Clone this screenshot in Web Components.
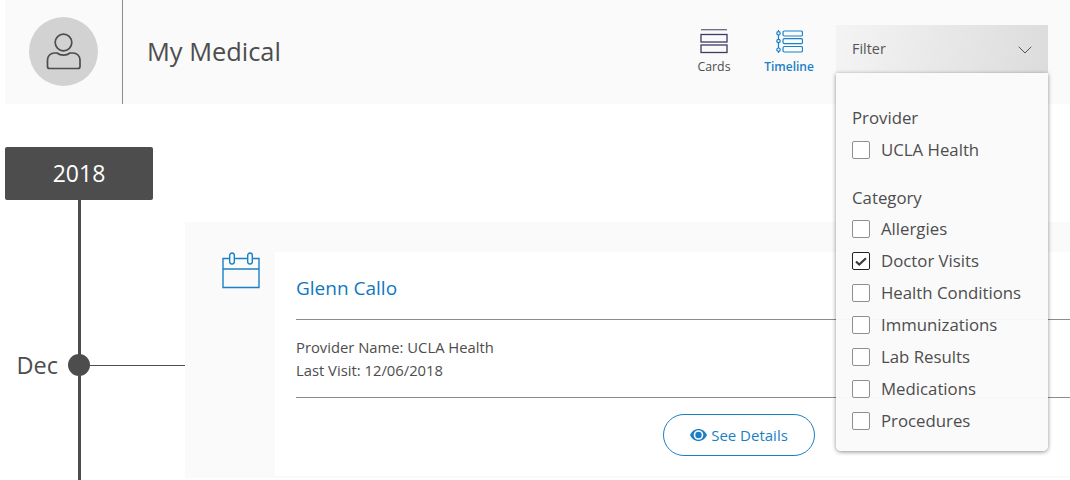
<!doctype html>
<html><head><meta charset="utf-8">
<style>
html,body{margin:0;padding:0;background:#fff}
body{width:1070px;height:480px;overflow:hidden;font-family:"Open Sans",sans-serif;color:#4d4d4d}
</style></head><body>
<med-page>
  <med-header slot="header"></med-header>
  <med-timeline slot="rail"></med-timeline>
  <med-card slot="main"></med-card>
</med-page>
<script>
function el(name,html){customElements.define(name,class extends HTMLElement{connectedCallback(){this.attachShadow({mode:'open'}).innerHTML=html}})}
el('med-page',`<style>:host{display:block;width:1070px;height:480px;overflow:hidden}
.h{display:block;position:relative;z-index:2}.b{display:flex;height:376px}.r{display:block;width:185px;flex:none}.m{display:block;flex:1;min-width:0}</style>
<div class="h"><slot name="header"></slot></div><div class="b"><div class="r"><slot name="rail"></slot></div><div class="m"><slot name="main"></slot></div></div>`);
el('med-header',`<style>:host{display:flex;align-items:stretch;height:104px;margin-left:5px;background:#fafafa;color:#4d4d4d}
.av{width:118px;box-sizing:border-box;border-right:1px solid #8c8c8c;display:flex;align-items:center;padding:0 0 1px 24px}
.c{width:69px;height:69px;border-radius:50%;background:#d2d2d2;display:flex;align-items:center;justify-content:center;flex:none}
h1{margin:0 0 0 24px;font:400 25.400px/103px "Open Sans",sans-serif;color:#4d4d4d;flex:1}
</style><div class="av"><div class="c"><svg width="36" height="40" viewBox="0 0 36 40" fill="none" stroke="#4d4d4d" stroke-width="1.700"><circle cx="17.500" cy="10.500" r="8.300"/><path d="M11 21c1.800 1.500 4 2.200 6.500 2.200S22.200 22.500 24 21h3c4 0 7 3 7 7v6.500c0 1.100-.9 2-2 2H3.500c-1.100 0-2-.9-2-2V28c0-4 3-7 7-7z"/></svg></div></div>
<h1>My Medical</h1><med-views></med-views><med-filter></med-filter><div style="width:22px"></div>`);
el('med-views',`<style>:host{display:flex;gap:33px;font:400 12.300px/16px "Open Sans",sans-serif;color:#4d4d4d;padding-top:29px;box-sizing:border-box}
.v{display:flex;flex-direction:column;align-items:center;white-space:nowrap}.v svg{display:block;height:25px;margin-bottom:5px}
.t{color:#1a80c7;font-weight:600;font-size:12px}
</style>
<div class="v" style="width:34px"><svg width="28" height="25" viewBox="0 0 28 25" fill="none" stroke="#3f3a63" stroke-width="1.300"><path d="M1 .7h26" stroke="#6d6982"/><rect x="1" y="5.500" width="26" height="7.500"/><rect x="1" y="16" width="26" height="7.500"/></svg><span>Cards</span></div>
<div class="v" style="width:50px"><svg width="28" height="25" viewBox="0 0 28 25" fill="none" stroke="#1a80c7" stroke-width="1.200"><path d="M3.500 1v23"/><circle cx="3.500" cy="4.300" r="1.700" fill="#fafafa"/><circle cx="3.500" cy="12" r="1.700" fill="#fafafa"/><circle cx="3.500" cy="20.700" r="1.700" fill="#fafafa"/><rect x="8" y="2" width="19.500" height="5" rx="1.500"/><rect x="8" y="9.700" width="19.500" height="5" rx="1.500"/><rect x="8" y="17.500" width="19.500" height="5.500" rx="1.500"/></svg><span class="t">Timeline</span></div>`);
el('med-filter',`<style>:host{display:block;position:relative;width:212px;height:48px;margin:25px 0 0 22px;flex:none;font-family:"Open Sans",sans-serif}
.btn{height:48px;box-sizing:border-box;padding:0 16px;display:flex;align-items:center;justify-content:space-between;background:linear-gradient(100deg,#f4f4f4,#dcdcdc);font-size:14.400px;color:#555}
.btn span{margin-top:-2px}
.p{position:absolute;left:0;top:48px;width:212px;height:378px;box-sizing:border-box;padding:34px 16px 0;background:rgba(250,250,250,.96);border-radius:0 0 5px 5px;box-shadow:0 1px 4px rgba(0,0,0,.45)}
h2{margin:0;font:400 16.800px/22px "Open Sans",sans-serif;color:#4d4d4d}
.g{margin-top:5px;margin-bottom:21px}
</style><div class="btn"><span>Filter</span><svg width="14" height="8" viewBox="0 0 14 8" fill="none" stroke="#555" stroke-width="1" style="margin-right:0;margin-top:2px"><path d="M.7.7 7 7l6.300-6.300"/></svg></div>
<div class="p"><h2>Provider</h2><div class="g"><med-check label="UCLA Health"></med-check></div>
<h2>Category</h2><div class="g" style="margin-top:4px"><med-check label="Allergies"></med-check><med-check label="Doctor Visits" checked="1"></med-check><med-check label="Health Conditions"></med-check><med-check label="Immunizations"></med-check><med-check label="Lab Results"></med-check><med-check label="Medications"></med-check><med-check label="Procedures"></med-check></div></div>`);
customElements.define('med-check',class extends HTMLElement{connectedCallback(){const c=this.hasAttribute('checked');this.attachShadow({mode:'open'}).innerHTML=`<style>:host{display:flex;align-items:center;height:32px;font:400 16.800px/22px "Open Sans",sans-serif;color:#4d4d4d}
.b{width:18px;height:18px;box-sizing:border-box;border:${c?'1.5px solid #222':'1px solid #8f8f8f'};border-radius:2px;background:#fff;margin-right:11px;display:flex;align-items:center;justify-content:center;flex:none}</style>
<span class="b">${c?'<svg width="12" height="9" viewBox="0 0 12 9" fill="none" stroke="#3a3a3a" stroke-width="2.200"><path d="M1 4.500l3.200 3L11 1.200"/></svg>':''}</span><span>${this.getAttribute('label')}</span>`}});
el('med-timeline',`<style>:host{display:flex;flex-direction:column;height:376px;padding-top:43px;box-sizing:border-box;position:relative}
.y{margin-left:5px;width:148px;height:52.500px;background:#4d4d4d;color:#fff;border-radius:2px;font:400 23px/52px "Open Sans",sans-serif;text-align:center;flex:none}
.r{flex:1;position:relative}
.l{position:absolute;left:78px;top:0;bottom:0;width:3px;background:#4d4d4d}
.m{position:absolute;left:0;right:0;top:154.500px;height:22px;display:flex;align-items:center}
.d{width:58px;text-align:right;font:400 23.500px/22px "Open Sans",sans-serif;color:#4d4d4d;margin-right:10px}
.o{width:22px;height:22px;border-radius:50%;background:#4d4d4d;flex:none}
.c{flex:1;height:1px;background:#4d4d4d}
</style><div class="y">2018</div><div class="r"><div class="l"></div><div class="m"><span class="d">Dec</span><span class="o"></span><span class="c"></span></div></div>`);
el('med-card',`<style>:host{display:flex;margin-top:118px;height:256px;box-sizing:border-box;padding:30px 0 2px 0;background:#fafafa;font-family:"Open Sans",sans-serif;color:#4d4d4d}
.i{width:90px;flex:none;padding-left:37px;box-sizing:border-box}.i svg{display:block}
.w{flex:1;background:#fff;padding-left:21px;display:flex;flex-direction:column}
a{color:#0f78c0;font:400 19px/24px "Open Sans",sans-serif;margin-top:24px;height:43px;border-bottom:1px solid #8c8c8c}
.t{font-size:14.800px;line-height:23px;padding:16px 0 15px;border-bottom:1px solid #8c8c8c;color:#4d4d4d}
.b{margin:16px 0 0 367px;width:152px;height:42px;box-sizing:border-box;border:1.500px solid #1b7fc4;border-radius:21px;color:#1b7fc4;font-size:15px;font-weight:400;display:flex;align-items:center;justify-content:center;gap:4px}
</style><div class="i"><svg width="38" height="37" viewBox="0 0 38 37" fill="none" stroke="#1a80c7" stroke-width="1.400"><path d="M1 6.500h36v29H1z"/><path d="M1 17h36"/><rect x="7.700" y="1" width="4.600" height="11" rx="2.300" fill="#fafafa"/><rect x="25.700" y="1" width="4.600" height="11" rx="2.300" fill="#fafafa"/></svg></div>
<div class="w"><a>Glenn Callo</a><div class="t">Provider Name: UCLA Health<br>Last Visit: 12/06/2018</div>
<div class="b"><svg width="17" height="12" viewBox="0 0 17 12"><path fill="#1b7fc4" fill-rule="evenodd" d="M8.500 0C4.800 0 1.700 2.300 0 6c1.700 3.700 4.800 6 8.500 6s6.800-2.300 8.500-6c-1.700-3.700-4.800-6-8.500-6zm0 1.200a4.800 4.800 0 1 1 0 9.600 4.800 4.800 0 0 1 0-9.600z"/><circle cx="8.500" cy="6" r="3.200" fill="#1b7fc4"/></svg><span>See Details</span></div></div>`);
</script>
</body></html>
